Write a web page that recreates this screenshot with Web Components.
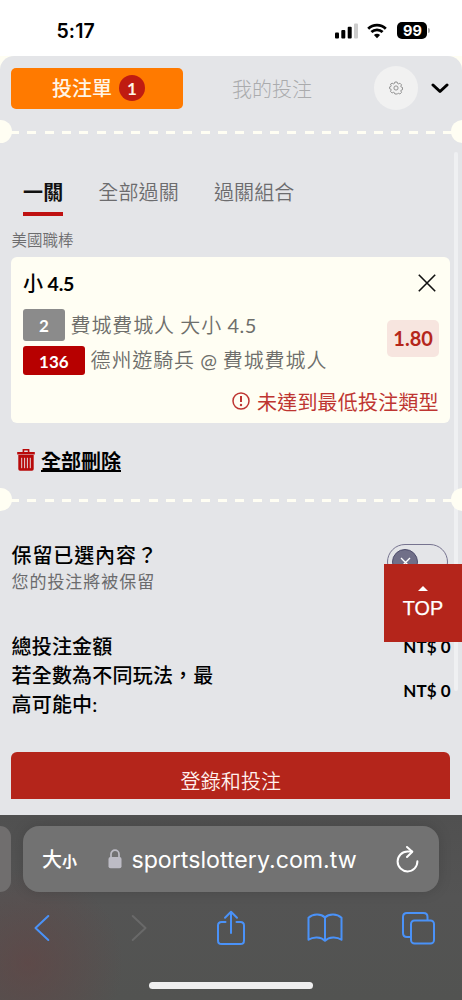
<!DOCTYPE html>
<html lang="zh-Hant">
<head>
<meta charset="utf-8">
<title>投注單</title>
<style>
html,body{margin:0;height:100%;overflow:hidden;background:#fff}
body{font-family:Lato,"Noto Sans CJK TC",sans-serif}
</style>
</head>
<body>
<bet-page></bet-page>
<script>
const define = (name, html) => {
  const t = document.createElement('template');
  t.innerHTML = '<style>*{box-sizing:border-box}:host{box-sizing:border-box;display:block}svg{display:block;flex:none}em{font-style:normal}</style>' + html;
  customElements.define(name, class extends HTMLElement {
    constructor() {
      super();
      this.attachShadow({mode: 'open'}).append(t.content.cloneNode(true));
    }
  });
};

define('status-bar', `
<style>
:host{display:flex;height:56px;padding:5px 32px 0 56.5px;align-items:center;background:#fff;color:#000}
.time{font:600 19.5px/24px Inter,sans-serif;letter-spacing:.1px;flex:1}
.icons{display:flex;align-items:center;gap:9px}
.batt{display:flex;align-items:center;gap:1px}
.level{width:30px;height:17px;border-radius:5px;background:#000;color:#fff;font:700 14.5px/17px Inter,sans-serif;text-align:center}
.cap{width:1.6px;height:5px;border-radius:0 2px 2px 0;background:#aaa}
.wifi{margin-right:1px}
</style>
<div class="time">5:17</div>
<div class="icons">
<svg width="23" height="16" viewBox="0 0 23 16"><rect y="9.5" width="4" height="6" rx="1"/><rect x="6.3" y="7" width="4" height="8.5" rx="1"/><rect x="12.7" y="3.8" width="4" height="11.7" rx="1"/><rect x="19" y="0.5" width="4" height="15" rx="1" fill="#ccc"/></svg>
<svg class="wifi" width="20" height="16" viewBox="0 0 20 16"><path d="M1.2 5.7a12.6 12.6 0 0 1 17.6 0M4.4 9.1a8.1 8.1 0 0 1 11.2 0" fill="none" stroke="#000" stroke-width="2.8"/><path d="M10 15.2 6.9 12.1a4.6 4.6 0 0 1 6.2 0z"/></svg>
<div class="batt"><div class="level">99</div><div class="cap"></div></div>
</div>`);

define('slip-header', `
<style>
:host{display:flex;align-items:center;height:64px;padding:0 13px 0 11.4px}
.on{width:171.2px;height:41px;border-radius:5px;background:#ff7a00;color:#fff5e6;display:flex;align-items:center;justify-content:center;gap:7px;font-size:20px;font-weight:500;padding-left:3px}
.on span:first-child{position:relative;top:-1px}
.n{width:26px;height:26px;border-radius:50%;background:#bf1c11;font-weight:700;font-size:17px;line-height:27px;text-align:center}
.off{width:179px;text-align:center;font-size:20px;font-weight:300;color:#aaabad}
.gear{width:44px;height:44px;border-radius:50%;background:#f1f1f1;margin-left:12px;display:grid;place-items:center}
.chev{margin-left:13px}
</style>
<div class="on"><span>投注單</span><span class="n">1</span></div>
<div class="off">我的投注</div>
<div class="gear"><svg width="14" height="14" viewBox="0 0 14 14" fill="none" stroke="#888" stroke-width=".9" stroke-linejoin="round"><path d="M5.9 1h2.2l.5 1.5.8.4 1.5-.7 1.6 1.6-.7 1.5.4.8 1.3.4v2.2l-1.3.4-.4.8.7 1.5-1.6 1.6-1.5-.7-.8.4L8.1 13H5.9l-.5-1.3-.8-.4-1.5.7L1.5 10.4l.7-1.5-.4-.8L.6 7.7V5.9l1.2-.4.4-.8-.7-1.5L3.1 2.2l1.5.7.8-.4z"/><circle cx="7" cy="7" r="2.1"/></svg></div>
<svg class="chev" width="18" height="11" viewBox="0 0 18 11"><path d="M2 2 9 8.5 16 2" fill="none" stroke="#000" stroke-width="3" stroke-linecap="round" stroke-linejoin="round"/></svg>`);

define('ticket-divider', `
<style>
:host{display:flex;align-items:center;justify-content:space-between;height:23px;overflow:hidden;position:relative;z-index:1;
background:repeating-linear-gradient(90deg,#fffef3 0 9px,transparent 9px 17.33px) 9.8px 11px/100% 3px no-repeat}
i{width:23px;height:23px;border-radius:50%;background:#fffef3;margin:0 -11.5px}
</style><i></i><i></i>`);

define('pick-tabs', `
<style>
:host{display:flex;gap:35px;padding:0 23px;height:40px;font-size:20px;line-height:32px;color:#6c6c6e;font-weight:350;white-space:nowrap;letter-spacing:.15px}
b{font-weight:700;color:#111;border-bottom:4.5px solid #bf1111}
</style><b>一關</b><span>全部過關</span><span>過關組合</span>`);

define('num-tag', `
<style>
:host{display:inline-flex;align-items:center;justify-content:center;border-radius:3px;color:#fff;font-weight:700;font-size:17px;padding-top:1px;background:var(--tag);width:var(--w);height:var(--h);flex:none}
</style><slot></slot>`);

define('bet-card', `
<style>
:host{background:#fffef3;border-radius:6px;height:166px;margin:0 11.7px 0 11.4px;padding:10px 11.5px 0;display:flex;flex-direction:column}
.head{display:flex;justify-content:space-between;align-items:center;height:30px;padding-right:3px;font-weight:500;font-size:20px;color:#000}
.head em{font-weight:700;font-size:19.5px;letter-spacing:-.15px}
.head svg{margin-top:1px}
.mid{display:flex;justify-content:space-between;margin-top:12px}
.row{display:flex;align-items:center;gap:6px;font-size:20px;font-weight:350;color:#6e6e6b;white-space:nowrap;letter-spacing:.88px;height:32px}
.row span{position:relative;top:-1px;left:-.3px;word-spacing:-1px}
.row em{font-weight:400;letter-spacing:.5px}
.row+.row{margin-top:5px;height:29px}
num-tag{letter-spacing:0}
.odds{width:51.5px;height:37px;margin-top:11px;border-radius:5px;background:#f7e5df;color:#b5271b;font-weight:700;font-size:20px;line-height:37px;text-align:center}
.warn{display:flex;justify-content:flex-end;align-items:center;gap:7px;height:30px;margin-top:11px;color:#be3531;font-size:20px;font-weight:400;letter-spacing:.2px}
</style>
<div class="head"><span>小<em> 4.5</em></span><svg width="18" height="18" viewBox="0 0 18 18"><path d="M.8.8 17.2 17.2M17.2.8.8 17.2" stroke="#111" stroke-width="1.6"/></svg></div>
<div class="mid"><div>
<div class="row"><num-tag style="--tag:#8b8b8b;--w:42px;--h:32px">2</num-tag><span>費城費城人 大小 <em>4.5</em></span></div>
<div class="row"><num-tag style="--tag:#b70000;--w:62px;--h:29px">136</num-tag><span>德州遊騎兵 <em>@</em> 費城費城人</span></div>
</div><div class="odds">1.80</div></div>
<div class="warn"><svg width="18" height="18" viewBox="0 0 18 18"><circle cx="9" cy="9" r="8" fill="none" stroke="#be3531" stroke-width="1.5"/><path d="M9 4v6" stroke="#be3531" stroke-width="2"/><circle cx="9" cy="13" r="1.2" fill="#be3531"/></svg><span>未達到最低投注類型</span></div>`);

define('delete-all', `
<style>
:host{display:flex;align-items:center;gap:6px;padding-left:17px;height:32px;font-weight:700;font-size:20px;color:#000}
span{text-decoration:underline;text-decoration-thickness:1.5px;text-underline-offset:1px;text-decoration-skip-ink:none;white-space:nowrap}
</style>
<svg width="18" height="22" viewBox="0 0 18 22" fill="#b80a0a"><path d="M5.6 3V0h6.8v3h5.4v2.4H.2V3z"/><path d="M7.2 1.4h3.6v1.6h-3.6z" fill="#e4e5e8"/><path d="M1.3 6h15.4V20q0 1.7-1.7 1.7H3q-1.7 0-1.7-1.7z"/><path d="M4.7 8.8v10.4M7.6 8.8v10.4M10.4 8.8v10.4M13.3 8.8v10.4" stroke="#e4d5d8" stroke-width="1"/></svg>
<span>全部刪除</span>`);

define('toggle-switch', `
<style>
:host{width:61px;height:36px;border:1.5px solid #76738f;border-radius:18px;padding:4px 4.5px}
div{width:26px;height:26px;border-radius:50%;background:#706f88;border:1.5px solid #4d4c6b;display:grid;place-items:center}
</style><div><svg width="11" height="11" viewBox="0 0 11 11"><path d="m1 1 9 9m0-9-9 9" stroke="#fff" stroke-width="1.4"/></svg></div>`);

define('keep-option', `
<style>
:host{display:flex;justify-content:space-between;padding:0 14.5px 0 11.5px;height:54px;white-space:nowrap}
.t{font-size:20px;line-height:28px;margin-top:-3px;font-weight:500;color:#000;letter-spacing:.9px}
.s{font-size:17px;line-height:26px;font-weight:400;color:#6b6b6d;letter-spacing:.95px}
</style><div><div class="t">保留已選內容？</div><div class="s">您的投注將被保留</div></div><toggle-switch></toggle-switch>`);

define('total-row', `
<style>
:host{display:flex;justify-content:space-between;align-items:center;padding:0 11.5px;font-weight:500;font-size:20px;line-height:29px;color:#000;letter-spacing:.2px}
.l{width:206px}
.v{font-size:17px;font-weight:700;letter-spacing:0;white-space:nowrap;height:29px}
</style><div class="l"><slot></slot></div><div class="v"><slot name="amount"></slot></div>`);

define('login-button', `
<style>
:host{height:47px;margin:0 11.7px 0 11.4px;border-radius:6px 6px 0 0;background:#b4251b;color:#fff1ee;text-align:center;font-size:20px;font-weight:350;line-height:58px;overflow:hidden;letter-spacing:.1px}
</style><slot></slot>`);

define('top-button', `
<style>
:host{position:absolute;z-index:2;left:384px;top:564px;width:78px;height:78px;background:#b4251b;color:#fff;display:flex;flex-direction:column;align-items:center;padding-top:22px}
span{font:400 19.8px/26px "Liberation Sans",sans-serif;margin-top:4px;-webkit-text-stroke:.25px #fff}
</style><svg width="10" height="5" viewBox="0 0 10 5"><path d="M0 5 5 0l5 5z" fill="#fff"/></svg><span>TOP</span>`);

define('safari-bar', `
<style>
:host{height:185px;display:flex;flex-direction:column;background:radial-gradient(circle 95px at 28px 148px,#65424290,#65424200),linear-gradient(#505050,#545454 45%,#525351);overflow:hidden}
.top{display:flex;gap:12px;height:66px;margin-top:11px}
.prev{width:11.4px;background:#706e6e;border-radius:0 14px 14px 0}
.url{width:415.5px;border-radius:16px;background:#727272;color:#fff;display:flex;align-items:center;padding:0 20px 0 18.5px;box-shadow:0 0 14px #0002;font:400 23.2px/30px Inter,sans-serif}
.aa{font:500 20px/30px "Noto Sans CJK TC",sans-serif;padding-top:1px}.aa small{font-size:15px;font-weight:700}
.url .lock{margin-left:31px;margin-right:9.5px}
.addr{flex:1;white-space:nowrap;padding-top:1px}
.nav{display:flex;align-items:center;padding-left:34px;height:38px;margin-top:17px}
.nav svg{fill:none;stroke:#4a92f8;stroke-width:2;stroke-linecap:round;stroke-linejoin:round}
.home{width:164px;height:7px;border-radius:4px;background:#efefef;margin:35px auto 0 149px}
</style>
<div class="top"><div class="prev"></div><div class="url"><span class="aa">大<small>小</small></span>
<svg class="lock" width="14" height="20" viewBox="0 0 14 20"><rect x=".5" y="8" width="13" height="11.2" rx="2" fill="#bdbcc5"/><path d="M3 9V5.2a4 4 0 0 1 8 0V9" fill="none" stroke="#bdbcc5" stroke-width="1.7"/></svg>
<span class="addr">sportslottery.com.tw</span>
<svg width="23" height="27" viewBox="0 0 23 27" fill="none" stroke="#fff" stroke-width="2" stroke-linecap="round" stroke-linejoin="round"><path d="M16 5.6H11.5A9.9 9.9 0 1 0 21.4 15.3"/><path d="m11 1 5.3 4.7L11 11"/></svg></div></div>
<div class="nav">
<svg width="16" height="28" viewBox="0 0 16 28"><path d="M14.3 2 1.5 14l12.8 12"/></svg>
<svg width="16" height="28" viewBox="0 0 16 28" style="stroke:#696969;margin-left:81px"><path d="M1.7 2 14.5 14 1.7 26"/></svg>
<svg width="28" height="36" viewBox="0 0 28 36" style="margin:-1px 0 0 70px"><path d="M8.5 12H4.6Q1 12 1 15.6v14.8Q1 34 4.6 34h18.8q3.6 0 3.6-3.6V15.6Q27 12 23.4 12h-3.9M14 23V2M8 7.8 14 1.8l6 6"/></svg>
<svg width="36" height="30" viewBox="0 0 36 30" style="margin-left:62px"><path d="M18 4.5C14 .5 6 .5 1.5 4.8V26.8C6 23.5 14 23.5 18 27.8C22 23.5 30 23.5 34.5 26.8V4.8C30 .5 22 .5 18 4.5zM18 4.5v23"/></svg>
<svg width="33" height="33" viewBox="0 0 33 33" style="margin-left:59px"><path d="M8 25H5q-4 0-4-4V5q0-4 4-4h16.5q4 0 4 4v3"/><rect x="9" y="8.5" width="23" height="23" rx="3.5"/></svg>
</div>
<div class="home"></div>`);

define('bet-page', `
<style>
:host{width:462px;height:1000px;position:relative;display:flex;flex-direction:column;overflow:hidden;background:#fffef3}
.sheet{height:759px;background:#e4e5e8;border-radius:14px 14px 0 0;overflow:hidden;flex:none}
.cat{font-size:15.5px;line-height:24px;font-weight:350;color:#6c6c6e;padding-left:11.5px;margin-top:12px;height:29px}
.scroll{position:absolute;left:453.5px;top:152px;width:4.5px;height:539px;border-radius:3px;background:#eff0f2}
</style>
<status-bar></status-bar>
<div class="sheet">
<slip-header></slip-header>
<ticket-divider></ticket-divider>
<pick-tabs style="margin-top:33px"></pick-tabs>
<div class="cat">美國職棒</div>
<bet-card></bet-card>
<delete-all style="margin-top:21px"></delete-all>
<ticket-divider style="margin-top:12px"></ticket-divider>
<keep-option style="margin-top:33px"></keep-option>
<total-row style="margin-top:34px">總投注金額<span slot="amount">NT$ 0</span></total-row>
<total-row>若全數為不同玩法，最高可能中:<span slot="amount">NT$ 0</span></total-row>
<login-button style="margin-top:33px">登錄和投注</login-button>
</div>
<div class="scroll"></div>
<top-button></top-button>
<safari-bar></safari-bar>`);
</script>
</body>
</html>
